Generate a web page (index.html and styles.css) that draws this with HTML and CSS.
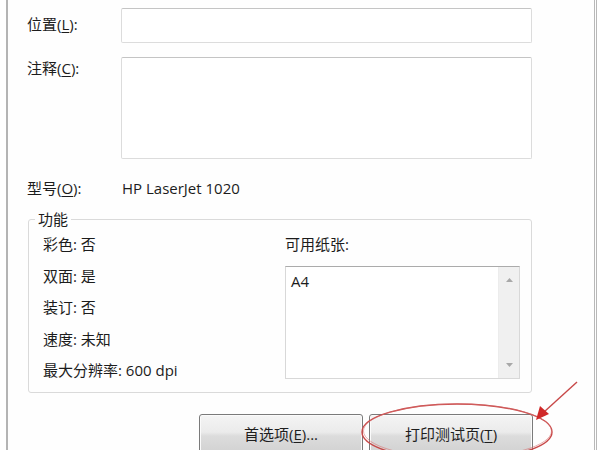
FILE: index.html
```html
<!DOCTYPE html>
<html lang="zh-CN">
<head>
<meta charset="utf-8">
<title>打印机属性</title>
<link rel="stylesheet" href="styles.css">
</head>
<body>
<div class="frame">
  <div class="form">
    <div class="label lbl-pos">位置(<u>L</u>):</div>
    <div class="field input"></div>
    <div class="label lbl-note">注释(<u>C</u>):</div>
    <div class="field textarea"></div>
    <div class="label model-row">型号(<u>O</u>):</div>
    <div class="model-row value">HP LaserJet 1020</div>
  </div>

  <fieldset class="group">
    <legend class="legend">功能</legend>
    <div class="group-body">
      <div class="caps">
        <div class="cap">彩色: 否</div>
        <div class="cap">双面: 是</div>
        <div class="cap">装订: 否</div>
        <div class="cap">速度: 未知</div>
        <div class="cap">最大分辨率: 600 dpi</div>
      </div>
      <div class="paper">
        <div class="cap">可用纸张:</div>
        <div class="listbox">
          <div class="list-items"><div class="item">A4</div></div>
          <div class="scrollbar">
            <svg class="arrow-up" width="7" height="4" viewBox="0 0 7 4"><path d="M0 4 L3.5 0 L7 4 Z" fill="#a8a8a8"/></svg>
            <svg class="arrow-down" width="7" height="4" viewBox="0 0 7 4"><path d="M0 0 L3.5 4 L7 0 Z" fill="#a8a8a8"/></svg>
          </div>
        </div>
      </div>
    </div>
  </fieldset>

  <div class="buttons">
    <div class="btn">首选项(<u>E</u>)...</div>
    <div class="btn">打印测试页(<u>T</u>)</div>
  </div>
</div>

<svg class="annot" width="600" height="450" viewBox="0 0 600 450">
  <ellipse cx="457" cy="432" rx="95" ry="28" fill="none" stroke="#c84848" stroke-width="1.4"/>
  <ellipse cx="457.5" cy="431" rx="94" ry="27" fill="none" stroke="#d87070" stroke-width="0.8" opacity="0.7"/>
  <line x1="577" y1="382" x2="544" y2="412" stroke="#c84848" stroke-width="1.4"/>
  <path d="M536 420 L540 406 L549 414 Z" fill="#d02828"/>
</svg>
</body>
</html>
```

FILE: styles.css
```css
html, body {
  margin: 0;
  padding: 0;
  background: #ffffff;
}

body {
  width: 600px;
  height: 450px;
  overflow: hidden;
  position: relative;
  font-family: "Open Sans", "Noto Sans CJK SC", sans-serif;
  font-size: 15px;
  color: #1c1c1c;
}

u {
  text-decoration: underline;
  text-underline-offset: 2px;
}

.frame {
  margin-left: 6px;
  width: 591px;
  height: 450px;
  box-sizing: border-box;
  border-left: 2px solid #b4b4b4;
  border-right: 3px double #b8b8b8;
  background: #fefefe;
  padding-top: 8px;
}

.form {
  display: grid;
  grid-template-columns: 94px 411px;
  row-gap: 14px;
  padding-left: 19px;
}

.label {
  line-height: 20px;
}

.lbl-pos {
  padding-top: 6px;
}

.lbl-note {
  padding-top: 1px;
}

.field {
  box-sizing: border-box;
  border: 1px solid #dcdcdc;
  border-top-color: #c4c4c4;
  border-radius: 2px;
  background: #ffffff;
}

.input {
  height: 35px;
}

.textarea {
  height: 102px;
}

.model-row {
  margin-top: 5px;
  line-height: 20px;
}

.value {
  padding-left: 1px;
}

.group {
  margin: 11px 0 0 20px;
  width: 504px;
  box-sizing: border-box;
  border: 1px solid #dadada;
  border-radius: 3px;
  padding: 0 0 12px 0;
}

.legend {
  margin-left: 6px;
  padding: 0 3px;
  line-height: 20px;
}

.group-body {
  display: grid;
  grid-template-columns: 242px 235px;
  padding-top: 5px;
  padding-left: 14px;
}

.caps {
  display: flex;
  flex-direction: column;
  gap: 11.5px;
}

.cap {
  line-height: 20px;
}

.paper {
  display: flex;
  flex-direction: column;
  gap: 12px;
}

.listbox {
  height: 113px;
  box-sizing: border-box;
  border: 1px solid #d8d8d8;
  border-top-color: #ababab;
  display: flex;
  background: #ffffff;
}

.list-items {
  flex: 1;
  padding: 4px 5px;
}

.item {
  line-height: 20px;
}

.scrollbar {
  width: 20px;
  background: #f0f0f0;
  border-left: 1px solid #ececec;
  display: flex;
  flex-direction: column;
  justify-content: space-between;
  align-items: center;
  padding: 11px 0 11px 0;
}

.buttons {
  display: flex;
  gap: 6px;
  margin-top: 21px;
  padding-left: 191px;
}

.btn {
  width: 164px;
  height: 40px;
  box-sizing: border-box;
  border: 1px solid #7a7a7a;
  border-radius: 3px;
  background: linear-gradient(#f4f4f4 0%, #ebebeb 45%, #dcdcdc 55%, #d2d2d2 100%);
  box-shadow: inset 0 0 0 1px #fbfbfb;
  display: flex;
  justify-content: center;
  padding-top: 9px;
  line-height: 20px;
  color: #1e1e1e;
}

.annot {
  position: absolute;
  left: 0;
  top: 0;
  pointer-events: none;
}
```
